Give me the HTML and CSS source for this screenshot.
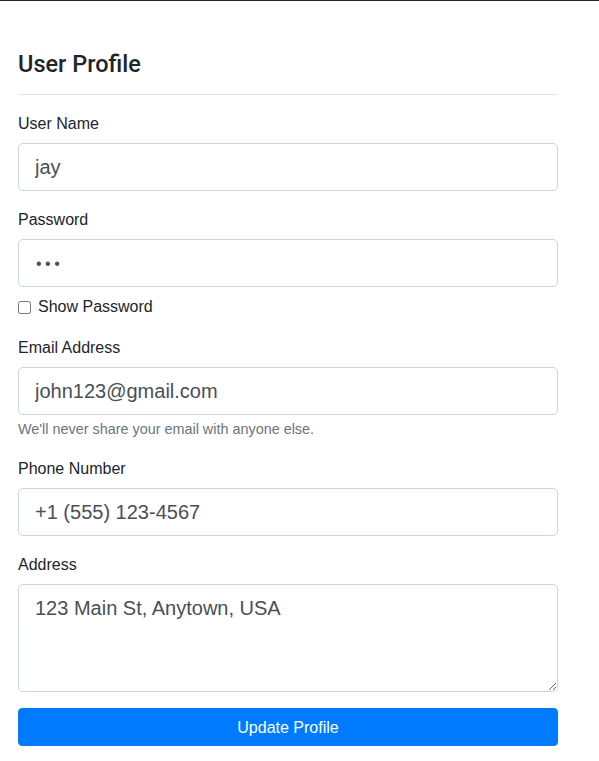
FILE: index.html
```html
<!DOCTYPE html>
<html lang="en">
<head>
<meta charset="utf-8">
<title>User Profile</title>
<link rel="stylesheet" href="styles.css">
</head>
<body>
<div class="topbar"></div>
<main class="container">
  <h4 class="title">User Profile</h4>
  <hr class="divider">
  <form class="form">
    <div class="form-group">
      <label class="label" for="username">User Name</label>
      <input class="form-control" id="username" type="text" value="jay">
    </div>
    <div class="form-group">
      <label class="label" for="password">Password</label>
      <input class="form-control password" id="password" type="password" value="abc">
      <div class="check-row">
        <input class="check" id="show" type="checkbox">
        <label class="check-label" for="show">Show Password</label>
      </div>
    </div>
    <div class="form-group">
      <label class="label" for="email">Email Address</label>
      <input class="form-control" id="email" type="email" value="john123@gmail.com">
      <small class="form-text">We'll never share your email with anyone else.</small>
    </div>
    <div class="form-group">
      <label class="label" for="phone">Phone Number</label>
      <input class="form-control" id="phone" type="tel" value="+1 (555) 123-4567">
    </div>
    <div class="form-group">
      <label class="label" for="address">Address</label>
      <textarea class="form-control textarea" id="address" rows="3">123 Main St, Anytown, USA</textarea>
    </div>
    <button class="btn" type="button">Update Profile</button>
  </form>
</main>
</body>
</html>
```
FILE: styles.css
```css
* { box-sizing: border-box; }
html, body {
  margin: 0;
  padding: 0;
  background: #fff;
}
body {
  font-family: "Liberation Sans", Arial, sans-serif;
  font-size: 16px;
  line-height: 24px;
  color: #212529;
}
.topbar {
  height: 1px;
  background: #212529;
}
.container {
  width: 540px;
  margin-left: 18px;
}
.title {
  margin: 49px 0 0;
  font-family: Roboto, "Liberation Sans", Arial, sans-serif;
  font-size: 23.5px;
  line-height: 28.8px;
  font-weight: 500;
  color: #212529;
}
.divider {
  margin: 15px 0 16px;
  border: 0;
  border-top: 1px solid rgba(0,0,0,0.1);
  height: 0;
}
.form {
  display: flex;
  flex-direction: column;
}
.form-group {
  display: flex;
  flex-direction: column;
  margin-bottom: 16px;
}
.label {
  display: block;
  margin-bottom: 8px;
  padding-top: 1px;
  height: 24px;
  line-height: 24px;
}
.form-control {
  display: block;
  width: 100%;
  height: 48px;
  padding: 9px 16px 7px;
  font-family: "Liberation Sans", Arial, sans-serif;
  font-size: 20px;
  line-height: 30px;
  color: #495057;
  background: #fff;
  border: 1px solid #ced4da;
  border-radius: 4.8px;
  outline: none;
  margin: 0;
}
.password {
  font-size: 16px;
  letter-spacing: 3.5px;
  padding-left: 17px;
}
.textarea {
  height: 108px;
  padding-top: 8px;
  resize: vertical;
}
.check-row {
  display: flex;
  align-items: center;
  margin-top: 8px;
  height: 24px;
}
.check {
  width: 13px;
  height: 13px;
  margin: 2px 7px 0 0;
}
.check-label {
  line-height: 24px;
  padding-top: 1px;
}
.form-text {
  display: block;
  margin-top: 4px;
  font-size: 14.4px;
  line-height: 21px;
  color: #6c757d;
}
.btn {
  display: block;
  width: 100%;
  height: 38px;
  padding: 7px 12px 5px;
  font-family: "Liberation Sans", Arial, sans-serif;
  font-size: 16px;
  line-height: 24px;
  color: #fff;
  background: #007bff;
  border: 1px solid #007bff;
  border-radius: 4px;
  cursor: pointer;
}
```
